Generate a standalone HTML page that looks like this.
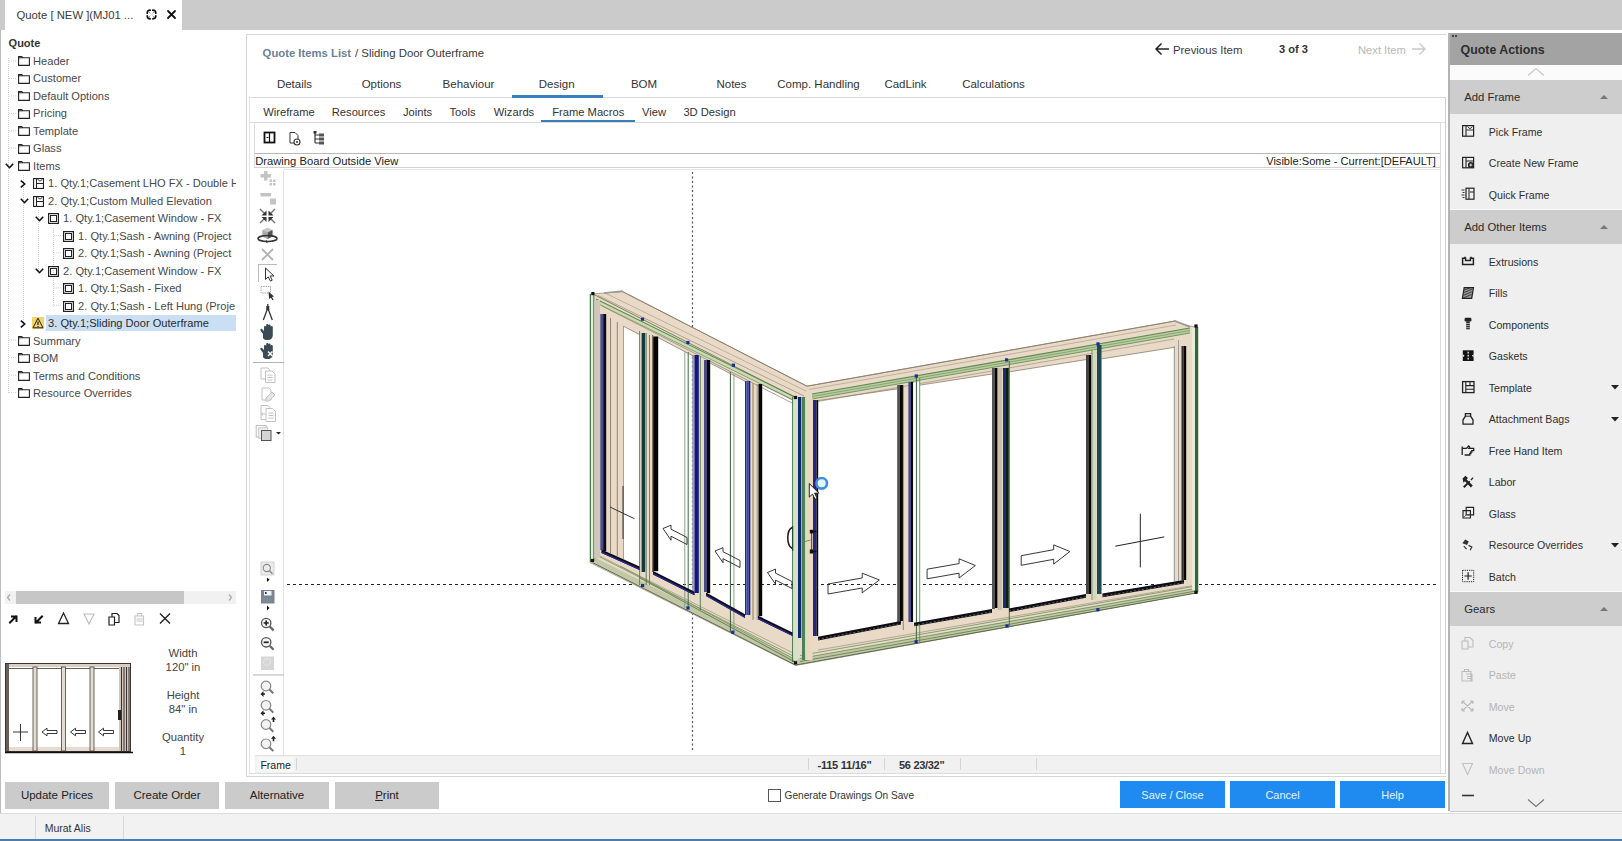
<!DOCTYPE html>
<html><head><meta charset="utf-8">
<style>
*{margin:0;padding:0;box-sizing:border-box}
html,body{width:1622px;height:841px;overflow:hidden;background:#fff;font-family:"Liberation Sans",sans-serif;color:#333;position:relative}
.a{position:absolute;white-space:nowrap;line-height:1}
svg{position:absolute;overflow:visible}
</style></head><body>
<div class="a" style="left:0px;top:0px;width:1622px;height:30px;background:#cbcbcb;"></div>
<div class="a" style="left:5px;top:0px;width:177px;height:30px;background:#fff;"></div>
<div class="a" style="left:16.5px;top:10.13px;font-size:11.3px;color:#3a3a3a;">Quote [ NEW ](MJ01 ...</div>
<svg style="left:145px;top:8px" width="13" height="13" viewBox="0 0 13 13"><g fill="none" stroke="#111" stroke-width="1.7" stroke-linecap="round"><path d="M2.2 5.2Q2.2 2.2 5.2 2.2M7.8 2.2Q10.8 2.2 10.8 5.2M10.8 7.8Q10.8 10.8 7.8 10.8M5.2 10.8Q2.2 10.8 2.2 7.8"/></g><path d="M3.5 3.5l2 2M9.5 3.5l-2 2M3.5 9.5l2-2M9.5 9.5l-2-2" stroke="#999" stroke-width="0.9"/></svg>
<svg style="left:167px;top:9.5px" width="9" height="9" viewBox="0 0 9 9"><path d="M1 1l7 7M8 1L1 8" stroke="#111" stroke-width="1.8" stroke-linecap="round"/></svg>
<div class="a" style="left:0px;top:30px;width:1px;height:783px;background:#bdbdbd;"></div>
<div class="a" style="left:8.6px;top:37.79px;font-size:11px;color:#333;font-weight:bold;">Quote</div>
<svg style="left:0;top:0" width="243" height="420"><g stroke="#d0d0d0" stroke-width="1" stroke-dasharray="1 1" fill="none"><path d="M8.5 58V394M23.5 175V324M38.5 210V272M53.5 228V307"/><path d="M9 61.0h8"/><path d="M9 78.5h8"/><path d="M9 95.9h8"/><path d="M9 113.3h8"/><path d="M9 130.8h8"/><path d="M9 148.2h8"/><path d="M9 340.2h8"/><path d="M9 357.6h8"/><path d="M9 375.1h8"/><path d="M9 392.6h8"/><path d="M54 235.5h8"/><path d="M54 252.9h8"/><path d="M54 287.9h8"/><path d="M54 305.3h8"/></g></svg>
<div class="a" style="left:46px;top:314.5px;width:190px;height:16.5px;background:#cadff3;"></div>
<div class="a" style="left:0;top:50px;width:236px;height:360px;overflow:hidden">
<svg style="left:17.8px;top:6.299999999999997px" width="12" height="10" viewBox="0 0 12 10"><path d="M0.6 9.4V0.6h3.2l0.8 1.2h6.8v7.6z" fill="none" stroke="#222" stroke-width="1.1"/><path d="M0.6 1.8h3.8" stroke="#222" stroke-width="1"/></svg>
<div class="a" style="left:33.1px;top:5.90px;font-size:11.1px;color:#484848;">Header</div>
<svg style="left:17.8px;top:23.78px" width="12" height="10" viewBox="0 0 12 10"><path d="M0.6 9.4V0.6h3.2l0.8 1.2h6.8v7.6z" fill="none" stroke="#222" stroke-width="1.1"/><path d="M0.6 1.8h3.8" stroke="#222" stroke-width="1"/></svg>
<div class="a" style="left:33.1px;top:23.38px;font-size:11.1px;color:#484848;">Customer</div>
<svg style="left:17.8px;top:41.25999999999999px" width="12" height="10" viewBox="0 0 12 10"><path d="M0.6 9.4V0.6h3.2l0.8 1.2h6.8v7.6z" fill="none" stroke="#222" stroke-width="1.1"/><path d="M0.6 1.8h3.8" stroke="#222" stroke-width="1"/></svg>
<div class="a" style="left:33.1px;top:40.86px;font-size:11.1px;color:#484848;">Default Options</div>
<svg style="left:17.8px;top:58.739999999999995px" width="12" height="10" viewBox="0 0 12 10"><path d="M0.6 9.4V0.6h3.2l0.8 1.2h6.8v7.6z" fill="none" stroke="#222" stroke-width="1.1"/><path d="M0.6 1.8h3.8" stroke="#222" stroke-width="1"/></svg>
<div class="a" style="left:33.1px;top:58.34px;font-size:11.1px;color:#484848;">Pricing</div>
<svg style="left:17.8px;top:76.22px" width="12" height="10" viewBox="0 0 12 10"><path d="M0.6 9.4V0.6h3.2l0.8 1.2h6.8v7.6z" fill="none" stroke="#222" stroke-width="1.1"/><path d="M0.6 1.8h3.8" stroke="#222" stroke-width="1"/></svg>
<div class="a" style="left:33.1px;top:75.82px;font-size:11.1px;color:#484848;">Template</div>
<svg style="left:17.8px;top:93.69999999999999px" width="12" height="10" viewBox="0 0 12 10"><path d="M0.6 9.4V0.6h3.2l0.8 1.2h6.8v7.6z" fill="none" stroke="#222" stroke-width="1.1"/><path d="M0.6 1.8h3.8" stroke="#222" stroke-width="1"/></svg>
<div class="a" style="left:33.1px;top:93.30px;font-size:11.1px;color:#484848;">Glass</div>
<svg style="left:17.8px;top:111.18px" width="12" height="10" viewBox="0 0 12 10"><path d="M0.6 9.4V0.6h3.2l0.8 1.2h6.8v7.6z" fill="none" stroke="#222" stroke-width="1.1"/><path d="M0.6 1.8h3.8" stroke="#222" stroke-width="1"/></svg>
<svg style="left:4.600000000000001px;top:113.18px" width="9" height="6" viewBox="0 0 9 6"><path d="M0.8 0.8l3.7 3.9 3.7-3.9" fill="none" stroke="#111" stroke-width="1.6"/></svg>
<div class="a" style="left:33.1px;top:110.78px;font-size:11.1px;color:#484848;">Items</div>
<svg style="left:32.8px;top:128.16px" width="11" height="11" viewBox="0 0 11 11"><g fill="none" stroke="#222" stroke-width="1.1"><rect x="0.55" y="0.55" width="9.9" height="9.9"/><path d="M3.5 0.6v9.8M3.5 5.5h7"/><path d="M4.5 1.2l2.5 2 2.5-2" stroke-width="0.9"/></g></svg>
<svg style="left:20.299999999999997px;top:130.16px" width="6" height="8" viewBox="0 0 6 8"><path d="M0.8 0.6l3.9 3.4-3.9 3.4" fill="none" stroke="#111" stroke-width="1.6"/></svg>
<div class="a" style="left:48.1px;top:128.26px;font-size:11.1px;color:#484848;">1. Qty.1;Casement LHO FX - Double H</div>
<svg style="left:32.8px;top:145.64px" width="11" height="11" viewBox="0 0 11 11"><g fill="none" stroke="#222" stroke-width="1.1"><rect x="0.55" y="0.55" width="9.9" height="9.9"/><path d="M3.5 0.6v9.8M3.5 5.5h7"/><path d="M4.5 1.2l2.5 2 2.5-2" stroke-width="0.9"/></g></svg>
<svg style="left:19.599999999999998px;top:148.14px" width="9" height="6" viewBox="0 0 9 6"><path d="M0.8 0.8l3.7 3.9 3.7-3.9" fill="none" stroke="#111" stroke-width="1.6"/></svg>
<div class="a" style="left:48.1px;top:145.74px;font-size:11.1px;color:#484848;">2. Qty.1;Custom Mulled Elevation</div>
<svg style="left:47.8px;top:163.12px" width="11" height="11" viewBox="0 0 11 11"><g fill="none" stroke="#222"><rect x="0.6" y="0.6" width="9.8" height="9.8" stroke-width="1.2"/><rect x="2.5" y="2.5" width="6" height="6" stroke-width="1"/></g></svg>
<svg style="left:34.599999999999994px;top:165.62px" width="9" height="6" viewBox="0 0 9 6"><path d="M0.8 0.8l3.7 3.9 3.7-3.9" fill="none" stroke="#111" stroke-width="1.6"/></svg>
<div class="a" style="left:63.1px;top:163.22px;font-size:11.1px;color:#484848;">1. Qty.1;Casement Window - FX</div>
<svg style="left:62.8px;top:180.60000000000002px" width="11" height="11" viewBox="0 0 11 11"><g fill="none" stroke="#222"><rect x="0.6" y="0.6" width="9.8" height="9.8" stroke-width="1.2"/><rect x="2.5" y="2.5" width="6" height="6" stroke-width="1"/></g></svg>
<div class="a" style="left:78.1px;top:180.70px;font-size:11.1px;color:#484848;">1. Qty.1;Sash - Awning (Project</div>
<svg style="left:62.8px;top:198.07999999999998px" width="11" height="11" viewBox="0 0 11 11"><g fill="none" stroke="#222"><rect x="0.6" y="0.6" width="9.8" height="9.8" stroke-width="1.2"/><rect x="2.5" y="2.5" width="6" height="6" stroke-width="1"/></g></svg>
<div class="a" style="left:78.1px;top:198.18px;font-size:11.1px;color:#484848;">2. Qty.1;Sash - Awning (Project</div>
<svg style="left:47.8px;top:215.56px" width="11" height="11" viewBox="0 0 11 11"><g fill="none" stroke="#222"><rect x="0.6" y="0.6" width="9.8" height="9.8" stroke-width="1.2"/><rect x="2.5" y="2.5" width="6" height="6" stroke-width="1"/></g></svg>
<svg style="left:34.599999999999994px;top:218.06px" width="9" height="6" viewBox="0 0 9 6"><path d="M0.8 0.8l3.7 3.9 3.7-3.9" fill="none" stroke="#111" stroke-width="1.6"/></svg>
<div class="a" style="left:63.1px;top:215.66px;font-size:11.1px;color:#484848;">2. Qty.1;Casement Window - FX</div>
<svg style="left:62.8px;top:233.04000000000002px" width="11" height="11" viewBox="0 0 11 11"><g fill="none" stroke="#222"><rect x="0.6" y="0.6" width="9.8" height="9.8" stroke-width="1.2"/><rect x="2.5" y="2.5" width="6" height="6" stroke-width="1"/></g></svg>
<div class="a" style="left:78.1px;top:233.14px;font-size:11.1px;color:#484848;">1. Qty.1;Sash - Fixed</div>
<svg style="left:62.8px;top:250.51999999999998px" width="11" height="11" viewBox="0 0 11 11"><g fill="none" stroke="#222"><rect x="0.6" y="0.6" width="9.8" height="9.8" stroke-width="1.2"/><rect x="2.5" y="2.5" width="6" height="6" stroke-width="1"/></g></svg>
<div class="a" style="left:78.1px;top:250.62px;font-size:11.1px;color:#484848;">2. Qty.1;Sash - Left Hung (Proje</div>
<svg style="left:31.799999999999997px;top:267.0px" width="12" height="12" viewBox="0 0 12 12"><rect x="0" y="0" width="12" height="12" fill="#f3d36b"/><path d="M6 1.2L11 10.8H1z" fill="none" stroke="#222" stroke-width="1"/><path d="M6 4.5v3.5M6 9v1" stroke="#222" stroke-width="1.2"/></svg>
<svg style="left:20.299999999999997px;top:270.0px" width="6" height="8" viewBox="0 0 6 8"><path d="M0.8 0.6l3.9 3.4-3.9 3.4" fill="none" stroke="#111" stroke-width="1.6"/></svg>
<div class="a" style="left:48.1px;top:268.10px;font-size:11.1px;color:#2a2a2a;">3. Qty.1;Sliding Door Outerframe</div>
<svg style="left:17.8px;top:285.98px" width="12" height="10" viewBox="0 0 12 10"><path d="M0.6 9.4V0.6h3.2l0.8 1.2h6.8v7.6z" fill="none" stroke="#222" stroke-width="1.1"/><path d="M0.6 1.8h3.8" stroke="#222" stroke-width="1"/></svg>
<div class="a" style="left:33.1px;top:285.58px;font-size:11.1px;color:#484848;">Summary</div>
<svg style="left:17.8px;top:303.46000000000004px" width="12" height="10" viewBox="0 0 12 10"><path d="M0.6 9.4V0.6h3.2l0.8 1.2h6.8v7.6z" fill="none" stroke="#222" stroke-width="1.1"/><path d="M0.6 1.8h3.8" stroke="#222" stroke-width="1"/></svg>
<div class="a" style="left:33.1px;top:303.06px;font-size:11.1px;color:#484848;">BOM</div>
<svg style="left:17.8px;top:320.94px" width="12" height="10" viewBox="0 0 12 10"><path d="M0.6 9.4V0.6h3.2l0.8 1.2h6.8v7.6z" fill="none" stroke="#222" stroke-width="1.1"/><path d="M0.6 1.8h3.8" stroke="#222" stroke-width="1"/></svg>
<div class="a" style="left:33.1px;top:320.54px;font-size:11.1px;color:#484848;">Terms and Conditions</div>
<svg style="left:17.8px;top:338.42px" width="12" height="10" viewBox="0 0 12 10"><path d="M0.6 9.4V0.6h3.2l0.8 1.2h6.8v7.6z" fill="none" stroke="#222" stroke-width="1.1"/><path d="M0.6 1.8h3.8" stroke="#222" stroke-width="1"/></svg>
<div class="a" style="left:33.1px;top:338.02px;font-size:11.1px;color:#484848;">Resource Overrides</div>
</div>
<div class="a" style="left:5px;top:591px;width:231px;height:13px;background:#f1f1f1;"></div>
<div class="a" style="left:16px;top:591px;width:168px;height:13px;background:#c6c6c6;"></div>
<svg style="left:6px;top:593px" width="230" height="9"><path d="M4 1.5L1.5 4.5 4 7.5" fill="none" stroke="#aaa" stroke-width="1.2"/><path d="M223 1.5l2.5 3-2.5 3" fill="none" stroke="#aaa" stroke-width="1.2"/></svg>
<svg style="left:0;top:608px" width="200" height="22"><g fill="none" stroke-linecap="square"><path d="M10 14.5l6-6M12 8.5h4.5v4.5" stroke="#111" stroke-width="2"/><path d="M42 8.5l-6 6M35.5 10v4.5H40" stroke="#111" stroke-width="2"/><path d="M63.5 5l-5 10.5h10z" stroke="#222" stroke-width="1.3"/><path d="M84 6h10l-5 10z" stroke="#bbb" stroke-width="1.1"/><path d="M109 9h5.5v8H109zM112 9V5.5h5l2 2v7h-4.5" stroke="#222" stroke-width="1.2"/><path d="M135 8h8.5v9H135zM137.5 8V5.5h4v2.5M137 11h5M137 13h5" stroke="#c4c4c4" stroke-width="1.1"/><path d="M160.5 6l9 9M169.5 6l-9 9" stroke="#222" stroke-width="1.4"/></g></svg>
<svg style="left:0;top:655px" width="140" height="105" viewBox="0 655 140 105">
<g>
<rect x="5.5" y="663.5" width="125" height="88" fill="#fff" stroke="#3a3330" stroke-width="1"/>
<rect x="6" y="664" width="124" height="3" fill="#d9cfc5"/>
<rect x="6" y="664" width="3" height="87" fill="#6a5f58"/>
<path d="M9 668.5h110M9 748.5h110" stroke="#6a5f58" stroke-width="1"/>
<rect x="9" y="747" width="110" height="4" fill="#e4dbd1"/>
<rect x="33" y="667" width="4" height="84" fill="#e4dbd1" stroke="#4a403a" stroke-width="0.8"/>
<rect x="61.5" y="667" width="4" height="84" fill="#e4dbd1" stroke="#4a403a" stroke-width="0.8"/>
<rect x="90" y="667" width="4" height="84" fill="#e4dbd1" stroke="#4a403a" stroke-width="0.8"/>
<rect x="119" y="667" width="11" height="84" fill="#cfc5bb"/>
<path d="M121.5 667v84M124 667v84M126.5 667v84M129 667v84" stroke="#3a3330" stroke-width="1"/>
<rect x="118" y="710" width="3" height="10" fill="#222"/>
<path d="M5 752.5h128" stroke="#111" stroke-width="1.6"/>
<path d="M13 732h15M20.5 724v17" stroke="#222" stroke-width="0.9"/>
<path d="M42 732l5-3.8v2.3h10v3h-10v2.3z" fill="#fff" stroke="#222" stroke-width="0.9"/><path d="M70.5 732l5-3.8v2.3h10v3h-10v2.3z" fill="#fff" stroke="#222" stroke-width="0.9"/><path d="M98.5 732l5-3.8v2.3h10v3h-10v2.3z" fill="#fff" stroke="#222" stroke-width="0.9"/>
</g></svg>
<div class="a" style="left:33.0px;width:300px;text-align:center;top:648.43px;font-size:11.3px;color:#444;">Width</div>
<div class="a" style="left:33.0px;width:300px;text-align:center;top:662.43px;font-size:11.3px;color:#444;">120" in</div>
<div class="a" style="left:33.0px;width:300px;text-align:center;top:690.33px;font-size:11.3px;color:#444;">Height</div>
<div class="a" style="left:33.0px;width:300px;text-align:center;top:704.43px;font-size:11.3px;color:#444;">84" in</div>
<div class="a" style="left:33.0px;width:300px;text-align:center;top:731.93px;font-size:11.3px;color:#444;">Quantity</div>
<div class="a" style="left:33.0px;width:300px;text-align:center;top:746.13px;font-size:11.3px;color:#444;">1</div>
<div class="a" style="left:5px;top:782px;width:104px;height:27px;background:#cbcbcb;"></div>
<div class="a" style="left:-93.0px;width:300px;text-align:center;top:790.27px;font-size:11.5px;color:#222;">Update Prices</div>
<div class="a" style="left:115px;top:782px;width:104px;height:27px;background:#cbcbcb;"></div>
<div class="a" style="left:17.0px;width:300px;text-align:center;top:790.27px;font-size:11.5px;color:#222;">Create Order</div>
<div class="a" style="left:225px;top:782px;width:104px;height:27px;background:#cbcbcb;"></div>
<div class="a" style="left:127.0px;width:300px;text-align:center;top:790.27px;font-size:11.5px;color:#222;">Alternative</div>
<div class="a" style="left:335px;top:782px;width:104px;height:27px;background:#cbcbcb;"></div>
<div class="a" style="left:237.0px;width:300px;text-align:center;top:790.27px;font-size:11.5px;color:#222;"><u>P</u>rint</div>
<div class="a" style="left:246px;top:34px;width:1200px;height:743px;border:1px solid #d6d6d6;border-right:none"></div>
<div class="a" style="left:249px;top:97px;width:1197px;height:677px;border-left:1px solid #e4e4e4;border-top:1px solid #dadada;border-bottom:1px solid #dadada;border-right:1px solid #cfcfcf"></div>
<div class="a" style="left:262.6px;top:48.23px;font-size:11.3px;color:#6b8198;font-weight:bold;">Quote Items List</div>
<div class="a" style="left:355.0px;top:48.15px;font-size:11.4px;color:#3a3a3a;">/ Sliding Door Outerframe</div>
<svg style="left:1154px;top:42px" width="16" height="14"><path d="M15 7H2M7.5 1.5L2 7l5.5 5.5" fill="none" stroke="#222" stroke-width="1.5"/></svg>
<div class="a" style="left:1173.0px;top:45.09px;font-size:11.35px;color:#3a3a3a;">Previous Item</div>
<div class="a" style="left:1279.0px;top:44.30px;font-size:11.1px;color:#333;font-weight:bold;">3 of 3</div>
<div class="a" style="left:1358.0px;top:45.22px;font-size:11.2px;color:#b8b8b8;">Next Item</div>
<svg style="left:1411px;top:42px" width="16" height="14"><path d="M1 7h13M8.5 1.5L14 7l-5.5 5.5" fill="none" stroke="#c8c8c8" stroke-width="1.3"/></svg>
<div class="a" style="left:144.5px;width:300px;text-align:center;top:79.27px;font-size:11.5px;color:#333;">Details</div>
<div class="a" style="left:231.5px;width:300px;text-align:center;top:79.27px;font-size:11.5px;color:#333;">Options</div>
<div class="a" style="left:318.5px;width:300px;text-align:center;top:79.27px;font-size:11.5px;color:#333;">Behaviour</div>
<div class="a" style="left:406.7px;width:300px;text-align:center;top:79.27px;font-size:11.5px;color:#333;">Design</div>
<div class="a" style="left:494.0px;width:300px;text-align:center;top:79.27px;font-size:11.5px;color:#333;">BOM</div>
<div class="a" style="left:581.5px;width:300px;text-align:center;top:79.27px;font-size:11.5px;color:#333;">Notes</div>
<div class="a" style="left:668.5px;width:300px;text-align:center;top:79.27px;font-size:11.5px;color:#333;">Comp. Handling</div>
<div class="a" style="left:755.5px;width:300px;text-align:center;top:79.27px;font-size:11.5px;color:#333;">CadLink</div>
<div class="a" style="left:843.5px;width:300px;text-align:center;top:79.27px;font-size:11.5px;color:#333;">Calculations</div>
<div class="a" style="left:512px;top:95px;width:91px;height:3px;background:#3b7dbd;"></div>
<div class="a" style="left:139.0px;width:300px;text-align:center;top:107.02px;font-size:11.2px;color:#333;">Wireframe</div>
<div class="a" style="left:208.5px;width:300px;text-align:center;top:107.02px;font-size:11.2px;color:#333;">Resources</div>
<div class="a" style="left:267.5px;width:300px;text-align:center;top:107.02px;font-size:11.2px;color:#333;">Joints</div>
<div class="a" style="left:312.5px;width:300px;text-align:center;top:107.02px;font-size:11.2px;color:#333;">Tools</div>
<div class="a" style="left:364.0px;width:300px;text-align:center;top:107.02px;font-size:11.2px;color:#333;">Wizards</div>
<div class="a" style="left:438.2px;width:300px;text-align:center;top:107.02px;font-size:11.2px;color:#333;">Frame Macros</div>
<div class="a" style="left:504.0px;width:300px;text-align:center;top:107.02px;font-size:11.2px;color:#333;">View</div>
<div class="a" style="left:559.5px;width:300px;text-align:center;top:107.02px;font-size:11.2px;color:#333;">3D Design</div>
<div class="a" style="left:541px;top:120px;width:94px;height:3px;background:#3b7dbd;"></div>
<div class="a" style="left:250px;top:122px;width:1195px;height:1px;background:#dedede;"></div>
<div class="a" style="left:254px;top:122px;width:1187px;height:33px;border:1px solid #dcdcdc;border-bottom:2px solid #b9b9b9"></div>
<svg style="left:262px;top:130px" width="70" height="16"><rect x="2.5" y="2.5" width="10" height="10" fill="none" stroke="#111" stroke-width="1.8"/><path d="M7.5 3v9M4.5 7.5h2" stroke="#111" stroke-width="1.2"/><path d="M28 2.5h5l3 3v7.5h-8z" fill="none" stroke="#333" stroke-width="1"/><circle cx="35" cy="12" r="3" fill="#fff" stroke="#333" stroke-width="1.1"/><circle cx="35" cy="12" r="1" fill="#333"/><path d="M53 2v11M53 5h4M53 9h4M53 13h4" stroke="#333" stroke-width="1.2"/><rect x="51.5" y="1" width="3" height="2.5" fill="#333"/><rect x="57" y="3.5" width="5" height="3" fill="#555"/><rect x="57" y="7.5" width="5" height="3" fill="#555"/><rect x="57" y="11.5" width="5" height="3" fill="#555"/></svg>
<div class="a" style="left:254px;top:154px;width:1187px;height:14px;background:#fff;border-left:1px solid #dcdcdc;border-right:1px solid #dcdcdc;border-bottom:1px solid #d2d2d2"></div>
<div class="a" style="left:255.2px;top:155.99px;font-size:11.23px;color:#222;">Drawing Board Outside View</div>
<div class="a" style="left:1266.2px;top:156.10px;font-size:11.1px;color:#222;">Visible:Some - Current:[DEFAULT]</div>
<div class="a" style="left:254px;top:168px;width:1187px;height:606px;border:1px solid #dcdcdc;border-left:none;border-top:none"></div>
<div class="a" style="left:283px;top:170px;width:1px;height:585px;background:#e2e2e2;"></div>
<div class="a" style="left:284px;top:169px;width:1157px;height:1px;background:#e8e8e8;"></div>
<div class="a" style="left:255px;top:755px;width:1185px;height:1px;background:#e0e0e0;"></div>
<div class="a" style="left:255px;top:756px;width:1185px;height:17px;background:#f1f1f1;"></div>
<div class="a" style="left:257px;top:757px;width:37px;height:15px;background:#f7f7f7;"></div>
<div class="a" style="left:296px;top:758px;width:1px;height:12px;background:#d4d4d4;"></div>
<div class="a" style="left:807.5px;top:758px;width:1px;height:12px;background:#d4d4d4;"></div>
<div class="a" style="left:883.5px;top:758px;width:1px;height:12px;background:#d4d4d4;"></div>
<div class="a" style="left:959.5px;top:758px;width:1px;height:12px;background:#d4d4d4;"></div>
<div class="a" style="left:1035.5px;top:758px;width:1px;height:12px;background:#d4d4d4;"></div>
<div class="a" style="left:260.4px;top:760.01px;font-size:10.5px;color:#222;">Frame</div>
<div class="a" style="left:817.6px;top:759.60px;font-size:11.1px;color:#333;font-weight:bold;letter-spacing:-0.3px">-115 11/16"</div>
<div class="a" style="left:899.0px;top:759.69px;font-size:11.0px;color:#333;font-weight:bold;letter-spacing:-0.3px">56 23/32"</div>
<div class="a" style="left:768px;top:788.5px;width:13px;height:13px;border:1.3px solid #555;background:#fff"></div>
<div class="a" style="left:784.6px;top:790.82px;font-size:10.13px;color:#333;">Generate Drawings On Save</div>
<div class="a" style="left:1120px;top:781px;width:105px;height:27px;background:#1f8bf0;"></div>
<div class="a" style="left:1022.5px;width:300px;text-align:center;top:790.19px;font-size:11px;color:#e8f2fc;">Save / Close</div>
<div class="a" style="left:1230px;top:781px;width:105px;height:27px;background:#1f8bf0;"></div>
<div class="a" style="left:1132.5px;width:300px;text-align:center;top:790.19px;font-size:11px;color:#e8f2fc;">Cancel</div>
<div class="a" style="left:1340px;top:781px;width:105px;height:27px;background:#1f8bf0;"></div>
<div class="a" style="left:1242.5px;width:300px;text-align:center;top:790.19px;font-size:11px;color:#e8f2fc;">Help</div>
<div class="a" style="left:1448px;top:33px;width:174px;height:778px;background:#efefef;"></div>
<div class="a" style="left:1448px;top:33px;width:2px;height:778px;background:#b3b3b3;"></div>
<div class="a" style="left:1450px;top:33px;width:172px;height:32px;background:#a3a3a3;"></div>
<div class="a" style="left:1460.5px;top:44.20px;font-size:12.4px;color:#2e2e2e;font-weight:bold;">Quote Actions</div>
<svg style="left:1452px;top:35px" width="8" height="4"><rect x="0" y="0" width="2" height="2" fill="#444"/><rect x="3" y="0" width="2" height="2" fill="#444"/></svg>
<div class="a" style="left:1450px;top:65px;width:172px;height:15px;background:#fbfbfb;"></div>
<svg style="left:1527px;top:67px" width="18" height="10"><path d="M1 8.5L9 1.5l8 7" fill="none" stroke="#c8c8c8" stroke-width="1.2"/></svg>
<div class="a" style="left:1450px;top:80px;width:172px;height:34px;background:#cdcdcd;"></div>
<div class="a" style="left:1464.3px;top:92.33px;font-size:11.3px;color:#2a2a2a;">Add Frame</div>
<svg style="left:1599px;top:94px" width="10" height="6"><path d="M1 5l4-4 4 4z" fill="#777"/></svg>
<div class="a" style="left:1450px;top:210px;width:172px;height:34px;background:#cdcdcd;"></div>
<div class="a" style="left:1464.3px;top:222.33px;font-size:11.3px;color:#2a2a2a;">Add Other Items</div>
<svg style="left:1599px;top:224px" width="10" height="6"><path d="M1 5l4-4 4 4z" fill="#777"/></svg>
<div class="a" style="left:1450px;top:592px;width:172px;height:34px;background:#cdcdcd;"></div>
<div class="a" style="left:1464.3px;top:604.33px;font-size:11.3px;color:#2a2a2a;">Gears</div>
<svg style="left:1599px;top:606px" width="10" height="6"><path d="M1 5l4-4 4 4z" fill="#777"/></svg>
<div class="a" style="left:1450px;top:209px;width:172px;height:1px;background:#fafafa;"></div>
<div class="a" style="left:1450px;top:591px;width:172px;height:1px;background:#fafafa;"></div>
<div class="a" style="left:1488.8px;top:126.53px;font-size:10.6px;color:#2e2e2e;">Pick Frame</div>
<svg style="left:1460px;top:124px" width="16" height="14"><rect x="2.6" y="1.6" width="11" height="10.6" fill="none" stroke="#222" stroke-width="1.2"/><path d="M6 1.6v10.6" stroke="#222" stroke-width="1.1"/><path d="M7.5 2.5l2.5 2.3 2.5-2.3M6.5 6h6.5" stroke="#222" stroke-width="0.9" fill="none"/></svg>
<div class="a" style="left:1488.8px;top:158.03px;font-size:10.6px;color:#2e2e2e;">Create New Frame</div>
<svg style="left:1460px;top:155.5px" width="16" height="14"><rect x="2.6" y="1.4" width="11" height="10.4" fill="none" stroke="#222" stroke-width="1.2"/><path d="M6 1.4v10.4M6.5 5h7" stroke="#222" stroke-width="1.1"/><circle cx="10.8" cy="9" r="2.9" fill="#222"/><path d="M10.8 7.5v3M9.3 9h3" stroke="#efefef" stroke-width="0.9"/></svg>
<div class="a" style="left:1488.8px;top:189.53px;font-size:10.6px;color:#2e2e2e;">Quick Frame</div>
<svg style="left:1460px;top:187px" width="16" height="14"><rect x="6" y="1.2" width="8" height="11" fill="none" stroke="#222" stroke-width="1.2"/><path d="M9 1.2v11M9.5 5h4.5" stroke="#222" stroke-width="1"/><path d="M1.5 3h3M2.5 5.5h2M1.5 8h3M2.5 10.5h2" stroke="#222" stroke-width="0.9"/></svg>
<div class="a" style="left:1488.8px;top:256.53px;font-size:10.6px;color:#2e2e2e;">Extrusions</div>
<svg style="left:1460px;top:254.0px" width="16" height="14"><path d="M2.6 10.4V4.2h3v2.4h4.8V4.2h3v6.2z" fill="none" stroke="#222" stroke-width="1.5"/><path d="M4 3.3h2M10 3.3h2" stroke="#222" stroke-width="1"/></svg>
<div class="a" style="left:1488.8px;top:288.03px;font-size:10.6px;color:#2e2e2e;">Fills</div>
<svg style="left:1460px;top:285.5px" width="16" height="14"><path d="M4.2 1.6h9.3l-1.8 10.8H2.4z" fill="#9a9a9a" stroke="#222" stroke-width="1.2"/><path d="M4.4 3.8l6.5-2.2M4 6.5l8.3-3.5M3.6 9.3l8.2-3.6M3.2 12l8.3-3.6" stroke="#222" stroke-width="0.8"/></svg>
<div class="a" style="left:1488.8px;top:319.53px;font-size:10.6px;color:#2e2e2e;">Components</div>
<svg style="left:1460px;top:317.0px" width="16" height="14"><rect x="4.6" y="0.8" width="6.8" height="3.6" rx="1.2" fill="#222"/><rect x="6.2" y="4.4" width="3.6" height="7.9" fill="#222"/><path d="M6.2 6.5h3.6M6.2 8.6h3.6M6.2 10.7h3.6" stroke="#efefef" stroke-width="0.7"/></svg>
<div class="a" style="left:1488.8px;top:351.03px;font-size:10.6px;color:#2e2e2e;">Gaskets</div>
<svg style="left:1460px;top:348.5px" width="16" height="14"><rect x="2.8" y="1.3" width="10.8" height="10.7" fill="#141414"/><path d="M2.8 5.2l1.8 1.5-1.8 1.5zM13.6 5.2l-1.8 1.5 1.8 1.5z" fill="#efefef"/><path d="M8.2 2.8v1.8M8.2 5.8v1.8M8.2 8.8v1.8" stroke="#efefef" stroke-width="1.3"/></svg>
<div class="a" style="left:1488.8px;top:382.53px;font-size:10.6px;color:#2e2e2e;">Template</div>
<svg style="left:1460px;top:380.0px" width="16" height="14"><rect x="2.6" y="1.6" width="11.4" height="11" fill="none" stroke="#222" stroke-width="1.3"/><path d="M5.8 1.6v11M5.8 5.6h8.2M5.8 9.2h8.2M10 1.6v4" stroke="#222" stroke-width="1.1"/></svg>
<svg style="left:1611px;top:385.0px" width="8" height="5"><path d="M0 0h8L4 4.5z" fill="#222"/></svg>
<div class="a" style="left:1488.8px;top:414.03px;font-size:10.6px;color:#2e2e2e;">Attachment Bags</div>
<svg style="left:1460px;top:411.5px" width="16" height="14"><path d="M5.4 1.6h5.2v2.6l2.4 3.6v4.4H3V7.8l2.4-3.6z" fill="none" stroke="#222" stroke-width="1.3"/><path d="M5.4 4.2h5.2" stroke="#222" stroke-width="1"/></svg>
<svg style="left:1611px;top:416.5px" width="8" height="5"><path d="M0 0h8L4 4.5z" fill="#222"/></svg>
<div class="a" style="left:1488.8px;top:445.53px;font-size:10.6px;color:#2e2e2e;">Free Hand Item</div>
<svg style="left:1460px;top:443.0px" width="16" height="14"><path d="M2.2 3.5v8.5M2.2 5.4h4.2l2.3-2.4 1 1-0.9 1.4h4.9v2.2h-1.9v1.4h-1v1.5h-1v1.5H4.6" fill="none" stroke="#222" stroke-width="1.3"/></svg>
<div class="a" style="left:1488.8px;top:477.03px;font-size:10.6px;color:#2e2e2e;">Labor</div>
<svg style="left:1460px;top:474.5px" width="16" height="14"><path d="M2.6 3.6l2.8-2.8 2.6 2.3-1.4 1.5 6.2 6-1.9 1.9-6-6.2-1.5 1.4z" fill="#222"/><path d="M12.8 2.2l-2.4 2.2 1 1 2.2-2.4zM9.2 5.8L3 11.4l1.6 1.6 5.8-6.2z" fill="#222"/></svg>
<div class="a" style="left:1488.8px;top:508.53px;font-size:10.6px;color:#2e2e2e;">Glass</div>
<svg style="left:1460px;top:506.0px" width="16" height="14"><path d="M6.2 1.4h7.4v7.4H6.2zM3 4.6h7.4V12H3z" fill="none" stroke="#222" stroke-width="1.15"/><path d="M4.2 10.8l1.6-1.6" stroke="#222" stroke-width="0.8"/></svg>
<div class="a" style="left:1488.8px;top:540.03px;font-size:10.6px;color:#2e2e2e;">Resource Overrides</div>
<svg style="left:1460px;top:537.5px" width="16" height="14"><path d="M2.4 5.2l2.8-3.8 3.6 2-1.8 3.6z" fill="#333"/><path d="M3.8 8.2l2.8 3M8.6 7.4l3.2 1.6-1.6 3.2" fill="none" stroke="#333" stroke-width="1.2"/></svg>
<svg style="left:1611px;top:542.5px" width="8" height="5"><path d="M0 0h8L4 4.5z" fill="#222"/></svg>
<div class="a" style="left:1488.8px;top:571.53px;font-size:10.6px;color:#2e2e2e;">Batch</div>
<svg style="left:1460px;top:569.0px" width="16" height="14"><rect x="2.5" y="1.3" width="11.2" height="11.4" fill="none" stroke="#222" stroke-width="1" stroke-dasharray="1.2 1"/><path d="M8.1 3.3v7.4M4.4 7h7.4" stroke="#222" stroke-width="1.2"/></svg>
<div class="a" style="left:1488.8px;top:638.53px;font-size:10.6px;color:#b5b5b5;">Copy</div>
<svg style="left:1460px;top:636.0px" width="16" height="14"><g fill="none" stroke="#bcbcbc" stroke-width="1.1"><path d="M2 5h6v8H2zM5 5V1.5h5l3 3V11H8"/></g></svg>
<div class="a" style="left:1488.8px;top:670.03px;font-size:10.6px;color:#b5b5b5;">Paste</div>
<svg style="left:1460px;top:667.5px" width="16" height="14"><g fill="none" stroke="#bcbcbc" stroke-width="1.1"><path d="M2 3.5h9V13H2zM4.5 3.5V1.5h4v2M6 6h6v7H6M7 8.5h4M7 10.5h4"/></g></svg>
<div class="a" style="left:1488.8px;top:701.53px;font-size:10.6px;color:#b5b5b5;">Move</div>
<svg style="left:1460px;top:699.0px" width="16" height="14"><g fill="none" stroke="#bcbcbc" stroke-width="1.2"><path d="M2 2l11 10M13 2L2 12M2 2h3M2 2v3M13 2h-3M13 2v3M2 12h3M2 12V9M13 12h-3M13 12V9"/></g></svg>
<div class="a" style="left:1488.8px;top:733.03px;font-size:10.6px;color:#2e2e2e;">Move Up</div>
<svg style="left:1460px;top:730.5px" width="16" height="14"><path d="M7.5 1.5L2.5 12.5h10z" fill="none" stroke="#222" stroke-width="1.4"/></svg>
<div class="a" style="left:1488.8px;top:764.53px;font-size:10.6px;color:#b5b5b5;">Move Down</div>
<svg style="left:1460px;top:762.0px" width="16" height="14"><path d="M2.5 1.5h10L7.5 12.5z" fill="none" stroke="#c0c0c0" stroke-width="1.1"/></svg>
<svg style="left:1462px;top:794px" width="14" height="4"><path d="M0 1.5h12" stroke="#333" stroke-width="1.6"/></svg>
<svg style="left:1527px;top:798px" width="18" height="10"><path d="M1 1.5l8 7 8-7" fill="none" stroke="#777" stroke-width="1.2"/></svg>
<div class="a" style="left:1450px;top:811px;width:172px;height:1px;background:#c8c8c8;"></div>
<div class="a" style="left:0px;top:813px;width:1622px;height:1px;background:#dedede;"></div>
<div class="a" style="left:0px;top:814px;width:1622px;height:25px;background:#f2f2f2;"></div>
<div class="a" style="left:0px;top:839px;width:1622px;height:2px;background:#4a7db0;"></div>
<div class="a" style="left:35px;top:816px;width:1px;height:23px;background:#d8d8d8;"></div>
<div class="a" style="left:123px;top:816px;width:1px;height:23px;background:#d8d8d8;"></div>
<div class="a" style="left:44.7px;top:822.51px;font-size:10.5px;color:#333;">Murat Alis</div>
<svg style="left:0;top:0" width="1622" height="841" viewBox="0 0 1622 841"><defs><clipPath id="cv"><rect x="284" y="170" width="1156" height="585"/></clipPath><clipPath id="gl"><polygon points="623.5,326.3 639.5,334.6 639.5,566.4 623.5,559.3"/><polygon points="658.0,337.5 694.5,356.7 694.5,591.7 658.0,573.5"/><polygon points="710.0,363.0 745.0,381.2 745.0,614.3 710.0,594.6"/><polygon points="762.0,384.7 792.5,400.0 792.5,632.5 762.0,617.7"/><polygon points="818.0,400.6 897.0,388.9 897.0,621.8 818.0,636.8"/><polygon points="920.0,385.1 992.0,374.0 992.0,609.1 920.0,621.7"/><polygon points="1010.0,371.7 1086.0,359.6 1086.0,594.1 1010.0,608.4"/><polygon points="1101.5,358.9 1174.0,347.4 1174.0,581.7 1101.5,593.7"/></clipPath></defs><g clip-path="url(#cv)"><path d="M287 584.5H1437" stroke="#222" stroke-width="1" stroke-dasharray="3 3"/><path d="M692.5 172V752" stroke="#555" stroke-width="1.2" stroke-dasharray="2 2.5"/><polygon points="590.0,294.0 623.0,291.8 807.0,386.2 1174.0,321.2 1190.0,326.0 1198.0,327.0 1198.0,592.5 795.5,665.5 590.0,562.5" fill="#e9dac8" stroke="#9a9080" stroke-width="0.8"/><polygon points="623.5,326.3 639.5,334.6 639.5,566.4 623.5,559.3" fill="#fff"/><polygon points="658.0,337.5 694.5,356.7 694.5,591.7 658.0,573.5" fill="#fff"/><polygon points="710.0,363.0 745.0,381.2 745.0,614.3 710.0,594.6" fill="#fff"/><polygon points="762.0,384.7 792.5,400.0 792.5,632.5 762.0,617.7" fill="#fff"/><polygon points="818.0,400.6 897.0,388.9 897.0,621.8 818.0,636.8" fill="#fff"/><polygon points="920.0,385.1 992.0,374.0 992.0,609.1 920.0,621.7" fill="#fff"/><polygon points="1010.0,371.7 1086.0,359.6 1086.0,594.1 1010.0,608.4" fill="#fff"/><polygon points="1101.5,358.9 1174.0,347.4 1174.0,581.7 1101.5,593.7" fill="#fff"/><g clip-path="url(#gl)"><path d="M287 584.5H1437" stroke="#222" stroke-width="1" stroke-dasharray="3 3"/><path d="M692.5 172V752" stroke="#555" stroke-width="1.2" stroke-dasharray="2 2.5"/></g><path d="M604.0 292.5L806.0 391.0" stroke="#b5a592" stroke-width="0.8" fill="none" /><path d="M598.0 295.5L804.0 396.0" stroke="#a0947e" stroke-width="0.8" fill="none" /><polygon points="596,299 796,397.5 796,401 596,302.5" fill="#cadbb4"/><path d="M596.0 299.0L796.0 397.5" stroke="#5f8a50" stroke-width="1.1" fill="none" /><path d="M596.0 302.8L796.0 401.3" stroke="#7a9a68" stroke-width="0.9" fill="none" /><path d="M602.0 306.0L794.0 404.0" stroke="#9a8a78" stroke-width="0.8" fill="none" /><path d="M809.0 389.5L1176.0 325.0" stroke="#b5a592" stroke-width="0.8" fill="none" /><polygon points="812,394 1190,328 1190,333 812,399" fill="#b9cba0"/><path d="M812.0 394.0L1190.0 328.0" stroke="#5f8a50" stroke-width="1.2" fill="none" /><path d="M812.0 396.5L1190.0 330.5" stroke="#86a070" stroke-width="0.9" fill="none" /><path d="M812.0 399.0L1190.0 333.0" stroke="#6f9a5f" stroke-width="1.0" fill="none" /><path d="M815.0 402.0L1174.0 339.0" stroke="#a89a88" stroke-width="0.8" fill="none" /><polygon points="594,557 795.5,659 795.5,664.5 594,562.5" fill="#b4c29c" opacity="0.75"/><polygon points="795.5,659 1196,588 1196,593 795.5,664.5" fill="#b4c29c" opacity="0.75"/><path d="M594.0 553.0L795.0 654.0" stroke="#a89a88" stroke-width="0.8" fill="none" /><path d="M600.0 557.0L795.0 657.0" stroke="#86a070" stroke-width="1" fill="none" /><path d="M620.0 566.0L795.0 659.5" stroke="#7f9a6a" stroke-width="1" fill="none" /><path d="M640.0 578.0L795.0 662.0" stroke="#6f8a5a" stroke-width="1.1" fill="none" /><path d="M818.0 650.0L1196.0 585.0" stroke="#a89a88" stroke-width="0.8" fill="none" /><path d="M800.0 655.5L1196.0 586.0" stroke="#86a070" stroke-width="1" fill="none" /><path d="M800.0 658.5L1196.0 588.5" stroke="#7f9a6a" stroke-width="1" fill="none" /><path d="M800.0 661.5L1196.0 591.0" stroke="#6f8a5a" stroke-width="1.1" fill="none" /><path d="M590.5 294.0V562.0" stroke="#4a7a4a" stroke-width="1"/><rect x="591" y="295.0" width="2.00" height="266.0" fill="#dff0d8" opacity="1"/><path d="M593.8 295.0V561.0" stroke="#4a7a4a" stroke-width="1"/><rect x="594.3" y="300.0" width="5.70" height="258.0" fill="#cfc8b8" opacity="1"/><rect x="600.3" y="314.0" width="2.90" height="236.0" fill="#4a4a8c" opacity="1"/><rect x="603.2" y="314.0" width="3.00" height="237.0" fill="#0a0a14" opacity="1"/><path d="M610.5 318.0V553.0" stroke="#8a7a68" stroke-width="0.9"/><path d="M617.3 322.0V556.0" stroke="#8a7a68" stroke-width="0.9"/><path d="M623.5 326.0V559.0" stroke="#9a9a90" stroke-width="0.9"/><path d="M639.6 331.0V585.0" stroke="#5a7a5a" stroke-width="0.9"/><rect x="641.6" y="333.0" width="3.60" height="239.0" fill="#163840" opacity="1"/><path d="M646.2 333.0V585.0" stroke="#4a7a4a" stroke-width="0.9"/><path d="M649.5 335.0V585.0" stroke="#5a8a4a" stroke-width="0.9"/><path d="M652.6 335.0V572.0" stroke="#6a5040" stroke-width="0.9"/><rect x="653.2" y="336.5" width="5.00" height="234.5" fill="#050505" opacity="1"/><path d="M684.8 352.0V608.0" stroke="#7a9a7a" stroke-width="0.9"/><path d="M688.2 352.0V608.0" stroke="#3a6a3a" stroke-width="1"/><rect x="692.2" y="355.0" width="2.30" height="237.0" fill="#9aa0c0" opacity="1"/><rect x="694.5" y="355.0" width="4.30" height="238.0" fill="#15157a" opacity="1"/><path d="M700.3 356.0V610.0" stroke="#4a7a4a" stroke-width="0.9"/><rect x="704" y="360.0" width="3.00" height="232.0" fill="#4a4a80" opacity="1"/><rect x="707" y="360.0" width="3.20" height="233.0" fill="#080808" opacity="1"/><path d="M730.4 372.0V632.0" stroke="#3a5a3a" stroke-width="1"/><path d="M733.9 374.0V632.0" stroke="#7a9a7a" stroke-width="0.9"/><rect x="745" y="381.0" width="1.30" height="234.0" fill="#2a2a8a" opacity="1"/><rect x="746.3" y="381.0" width="2.50" height="234.0" fill="#3a4ab8" opacity="1"/><rect x="748.8" y="381.0" width="1.50" height="234.0" fill="#1a1a70" opacity="1"/><path d="M753 383.0V620.0" stroke="#7a7a40" stroke-width="0.9"/><path d="M757.2 384.0V620.0" stroke="#888" stroke-width="0.9"/><rect x="758.5" y="384.0" width="3.70" height="232.0" fill="#050505" opacity="1"/><path d="M792.7 397.0V662.0" stroke="#3a6a3a" stroke-width="1"/><rect x="793.2" y="398.0" width="4.80" height="262.0" fill="#d4e2cc" opacity="1"/><rect x="798" y="397.0" width="3.20" height="241.0" fill="#102a70" opacity="1"/><rect x="801.2" y="397.0" width="0.80" height="241.0" fill="#8ab0d0" opacity="1"/><rect x="802" y="397.0" width="3.20" height="263.0" fill="#4f8058" opacity="1"/><rect x="805.2" y="398.0" width="2.80" height="262.0" fill="#d8e0c0" opacity="1"/><rect x="808" y="398.0" width="4.50" height="262.0" fill="#ead8c0" opacity="1"/><rect x="813" y="400.0" width="3.50" height="236.0" fill="#2a2480" opacity="1"/><rect x="816.5" y="400.0" width="1.70" height="236.0" fill="#080808" opacity="1"/><rect x="897.2" y="385.0" width="2.40" height="237.0" fill="#555" opacity="1"/><rect x="899.6" y="385.0" width="3.40" height="236.0" fill="#050505" opacity="1"/><path d="M903.3 385.0V630.0" stroke="#7a7a40" stroke-width="0.8"/><rect x="908.4" y="382.0" width="2.60" height="240.0" fill="#4a4a8a" opacity="1"/><rect x="911" y="382.0" width="2.20" height="240.0" fill="#080808" opacity="1"/><polygon points="913.2,383 920,382 920,623 913.2,624" fill="#fff"/><path d="M916.4 377.0V642.0" stroke="#3a6a3a" stroke-width="1"/><path d="M919.7 378.0V642.0" stroke="#5a8a5a" stroke-width="0.9"/><rect x="992" y="368.0" width="3.00" height="241.0" fill="#555" opacity="1"/><rect x="995" y="368.0" width="2.60" height="240.0" fill="#050505" opacity="1"/><rect x="997.6" y="368.0" width="4.40" height="242.0" fill="#c8c0a8" opacity="1"/><rect x="1003" y="368.0" width="3.00" height="240.0" fill="#1a2a80" opacity="1"/><rect x="1006" y="368.0" width="2.80" height="240.0" fill="#0a200a" opacity="1"/><path d="M1009.3 361.0V627.0" stroke="#3a7a3a" stroke-width="1"/><rect x="1086" y="355.0" width="3.00" height="239.0" fill="#444" opacity="1"/><rect x="1089" y="355.0" width="2.20" height="239.0" fill="#050505" opacity="1"/><path d="M1092 350.0V600.0" stroke="#7a8a50" stroke-width="0.9"/><rect x="1093" y="350.0" width="3.50" height="250.0" fill="#d0d8c8" opacity="1"/><rect x="1097" y="345.0" width="4.50" height="249.0" fill="#1f4a50" opacity="1"/><path d="M1174.3 346.0V581.0" stroke="#888" stroke-width="0.9"/><path d="M1178.5 340.0V581.0" stroke="#999" stroke-width="0.9"/><rect x="1181.5" y="346.0" width="2.10" height="234.0" fill="#333" opacity="1"/><rect x="1183.6" y="346.0" width="2.60" height="234.0" fill="#080505" opacity="1"/><rect x="1192" y="328.0" width="3.00" height="262.0" fill="#e8ecd8" opacity="1"/><rect x="1195" y="327.0" width="3.00" height="265.0" fill="#2f6a3f" opacity="1"/><polygon points="601.5,549.5 639.5,566.4 639.5,570.0 601.5,553.1" fill="#0c0c14"/><polygon points="601.5,551.5 639.5,568.4 639.5,570.0 601.5,553.1" fill="#2a2a90"/><path d="M623.5 326.3L639.5 334.6" stroke="#8a7c6c" stroke-width="0.8"/><polygon points="653.0,571.0 694.5,591.7 694.5,595.3 653.0,574.6" fill="#0c0c14"/><polygon points="653.0,573.0 694.5,593.7 694.5,595.3 653.0,574.6" fill="#2a2a90"/><path d="M658.0 337.5L694.5 356.7" stroke="#8a7c6c" stroke-width="0.8"/><polygon points="706.0,592.4 745.0,614.3 745.0,617.9 706.0,596.0" fill="#0c0c14"/><polygon points="706.0,594.4 745.0,616.3 745.0,617.9 706.0,596.0" fill="#2a2a90"/><path d="M710.0 363.0L745.0 381.2" stroke="#8a7c6c" stroke-width="0.8"/><polygon points="758.0,615.7 792.5,632.5 792.5,636.1 758.0,619.3" fill="#0c0c14"/><polygon points="758.0,617.7 792.5,634.5 792.5,636.1 758.0,619.3" fill="#2a2a90"/><path d="M762.0 384.7L792.5 400.0" stroke="#8a7c6c" stroke-width="0.8"/><polygon points="818.0,636.8 901.0,621.0 901.0,624.6 818.0,640.4" fill="#0c0c14"/><path d="M818.0 639.4L901.0 623.6" stroke="#777" stroke-width="0.8" stroke-dasharray="2 2"/><path d="M818.0 400.6L897.0 388.9" stroke="#8a7c6c" stroke-width="0.8"/><polygon points="914.0,622.7 992.0,609.1 992.0,612.7 914.0,626.3" fill="#0c0c14"/><path d="M914.0 625.3L992.0 611.7" stroke="#777" stroke-width="0.8" stroke-dasharray="2 2"/><path d="M920.0 385.1L992.0 374.0" stroke="#8a7c6c" stroke-width="0.8"/><polygon points="1009.0,608.5 1086.0,594.1 1086.0,597.7 1009.0,612.1" fill="#0c0c14"/><path d="M1009.0 611.1L1086.0 596.7" stroke="#777" stroke-width="0.8" stroke-dasharray="2 2"/><path d="M1010.0 371.7L1086.0 359.6" stroke="#8a7c6c" stroke-width="0.8"/><polygon points="1102.5,593.6 1184.0,580.0 1184.0,583.6 1102.5,597.2" fill="#0c0c14"/><path d="M1102.5 596.2L1184.0 582.6" stroke="#777" stroke-width="0.8" stroke-dasharray="2 2"/><path d="M1101.5 358.9L1174.0 347.4" stroke="#8a7c6c" stroke-width="0.8"/><path d="M593.0 294.0L795.5 397.5" stroke="#6a7a5a" stroke-width="0.9" fill="none" /><path d="M592.5 562.5L795.5 665.0" stroke="#5a6a4a" stroke-width="1" fill="none" /><path d="M795.5 665.0L1196.0 593.0" stroke="#5a6a4a" stroke-width="1" fill="none" /><path d="M623.0 291.8L807.0 386.2" stroke="#8a7a68" stroke-width="0.9" fill="none" /><path d="M807.0 386.2L1174.0 321.2" stroke="#8a7a68" stroke-width="0.9" fill="none" /><path d="M1174.0 320.5L1190.0 327.0" stroke="#999" stroke-width="1.6" fill="none" /><path d="M604.0 293.0L623.0 291.0" stroke="#999" stroke-width="1.6" fill="none" /><rect x="640.9" y="317.6" width="3.2" height="3.2" fill="#1a2aa0"/><rect x="686.3" y="340.9" width="3.2" height="3.2" fill="#1a2aa0"/><rect x="731.8" y="363.6" width="3.2" height="3.2" fill="#1a2aa0"/><rect x="914.7" y="374.4" width="3.2" height="3.2" fill="#1a2aa0"/><rect x="1005.0" y="358.3" width="3.2" height="3.2" fill="#1a2aa0"/><rect x="1096.4" y="342.3" width="3.2" height="3.2" fill="#1a2aa0"/><rect x="641.0" y="583.9" width="3.2" height="3.2" fill="#1a2aa0"/><rect x="686.4" y="606.4" width="3.2" height="3.2" fill="#1a2aa0"/><rect x="731.2" y="630.7" width="3.2" height="3.2" fill="#1a2aa0"/><rect x="914.5" y="640.2" width="3.2" height="3.2" fill="#1a2aa0"/><rect x="1005.4" y="624.4" width="3.2" height="3.2" fill="#1a2aa0"/><rect x="1096.3" y="608.2" width="3.2" height="3.2" fill="#1a2aa0"/><rect x="591.3" y="292.0" width="3.2" height="3.2" fill="#111"/><rect x="590.9" y="558.9" width="3.2" height="3.2" fill="#111"/><rect x="793.9" y="395.9" width="3.2" height="3.2" fill="#111"/><rect x="793.9" y="661.2" width="3.2" height="3.2" fill="#111"/><rect x="1194.4" y="324.4" width="3.2" height="3.2" fill="#111"/><rect x="1194.4" y="590.7" width="3.2" height="3.2" fill="#111"/><polygon points="687.0,544.5 671.0,536.2 671.0,540.2 663.0,528.5 671.0,525.2 671.0,529.2 687.0,537.5" fill="none" stroke="#222" stroke-width="0.9" stroke-linejoin="miter"/><polygon points="740.0,567.5 723.0,558.7 723.0,562.7 715.0,551.0 723.0,547.7 723.0,551.7 740.0,560.5" fill="none" stroke="#222" stroke-width="0.9" stroke-linejoin="miter"/><polygon points="792.0,588.5 775.5,580.1 775.5,584.1 767.5,572.5 775.5,569.1 775.5,573.1 792.0,581.5" fill="none" stroke="#222" stroke-width="0.9" stroke-linejoin="miter"/><polygon points="828.0,594.0 862.2,588.0 862.2,592.8 879.4,580.0 862.2,573.2 862.2,578.0 828.0,584.0" fill="none" stroke="#222" stroke-width="0.9" stroke-linejoin="miter"/><polygon points="927.1,578.8 959.1,573.2 959.1,578.0 975.4,565.5 959.1,558.8 959.1,563.6 927.1,569.2" fill="none" stroke="#222" stroke-width="0.9" stroke-linejoin="miter"/><polygon points="1021.2,565.3 1053.7,559.3 1053.7,564.1 1069.9,551.5 1053.7,544.9 1053.7,549.7 1021.2,555.7" fill="none" stroke="#222" stroke-width="0.9" stroke-linejoin="miter"/><path d="M623.0 486.0L623.0 539.0" stroke="#333" stroke-width="1" fill="none" /><path d="M610.0 507.0L634.4 518.7" stroke="#333" stroke-width="1" fill="none" /><path d="M1140.3 513.7L1140.3 567.4" stroke="#222" stroke-width="1" fill="none" /><path d="M1115.3 546.2L1164.3 536.9" stroke="#222" stroke-width="1" fill="none" /><path d="M792.2 527.5C786.3 530 786.3 545.5 792.2 548.5" stroke="#1a1a1a" stroke-width="1.5" fill="none"/><path d="M792.6 526v25" stroke="#2a4a2a" stroke-width="1.3"/><path d="M811.6 531v21" stroke="#6a5a48" stroke-width="1.3"/><rect x="809.8" y="529.8" width="3.4" height="3.6" fill="#111"/><rect x="809.8" y="549.5" width="3.4" height="4" fill="#111"/><path d="M813 531.5h3.5M813 551.5h3.5" stroke="#111" stroke-width="1.4"/><path d="M805 541.5l5.5-1.5" stroke="#8a7a68" stroke-width="0.9"/></g><path d="M809.3 483.5v13.6l3.2-3 2.6 5.2 2.1-1-2.6-5.1h4.3z" fill="#fff" stroke="#111" stroke-width="0.9" stroke-linejoin="round"/><circle cx="821.7" cy="483.3" r="5.3" fill="#e6f8ff" stroke="#3d8fe0" stroke-width="2.6"/></svg>
<svg style="left:0;top:0" width="300" height="800" viewBox="0 0 300 800"><g fill="#c4c4c4"><rect x="264" y="171" width="3.5" height="9.5"/><rect x="260.5" y="174" width="10.5" height="3.5"/><rect x="269.5" y="179.5" width="2.5" height="2.5"/><rect x="273" y="179.5" width="2.5" height="2.5"/><rect x="269.5" y="183" width="2.5" height="2.5"/><rect x="273" y="183" width="2.5" height="2.5"/></g><g fill="#c4c4c4"><rect x="260.5" y="193" width="10.5" height="3.5"/><rect x="270" y="198.5" width="6" height="6"/></g><g stroke="#777" stroke-width="1.5"><path d="M260 209l4.5 4.5M275 209l-4.5 4.5M260 223l4.5-4.5M275 223l-4.5-4.5"/></g><g fill="#333"><path d="M266.5 215.5v-5l-5 5z"/><path d="M268.5 215.5v-5l5 5z"/><path d="M266.5 217v5l-5-5z"/><path d="M268.5 217v5l5-5z"/></g><path d="M262.5 230l5-2.5 5 2.5v6.5l-5 2.5-5-2.5z" fill="#c8c8c8"/><path d="M267.5 232.5l5-2.5v6.5l-5 2.5z" fill="#555"/><path d="M262.5 230l5 2.5v6.5l-5-2.5z" fill="#aaa"/><ellipse cx="267.5" cy="238.5" rx="9.5" ry="3" fill="none" stroke="#333" stroke-width="1.6"/><path d="M265 241.5l2.5 2 -0.5-3.5z" fill="#333"/><path d="M262 249l11 11M273 249l-11 11" stroke="#b4b4b4" stroke-width="1.8"/><path d="M258.5 264V282" stroke="#aaa" stroke-width="0.8"/><path d="M258.5 264.5H277" stroke="#aaa" stroke-width="0.8"/><path d="M265.5 268v11.5l2.7-2.7 2.2 4.3 1.8-0.9-2.1-4.2h3.8z" fill="#fff" stroke="#333" stroke-width="1"/><rect x="261" y="286.5" width="9.5" height="6.5" fill="none" stroke="#888" stroke-width="0.8" stroke-dasharray="1.3 1"/><path d="M268.5 291.5l5.5 5-2 .5 1.7 2.7-1.2.6-1.6-2.6-1.8 1.2z" fill="#333"/><path d="M267.8 304v4M267.8 308l-4.5 12M267.8 308l4.5 12" stroke="#333" stroke-width="1.3" fill="none"/><rect x="266.3" y="306" width="3" height="4" fill="#333"/><path d="M263 334l-2.5-3.5a1.1 1.1 0 0 1 1.8-1.3l1.7 1.8V327a1.1 1.1 0 0 1 2.2 0v4.5v-6.5a1.1 1.1 0 0 1 2.2 0v6.5v-6a1.1 1.1 0 0 1 2.2 0v6v-4.5a1.1 1.1 0 0 1 2.2 0v8c0 3-2 5-5 5h-1.5c-1.8 0-2.5-.8-3.3-2z" fill="#3b4a55"/><path d="M263 353l-2.5-3.5a1.1 1.1 0 0 1 1.8-1.3l1.7 1.8V346a1.1 1.1 0 0 1 2.2 0v4.5v-6.5a1.1 1.1 0 0 1 2.2 0v6.5v-6a1.1 1.1 0 0 1 2.2 0v6v-4.5a1.1 1.1 0 0 1 2.2 0v8c0 3-2 5-5 5h-1.5c-1.8 0-2.5-.8-3.3-2z" fill="#3b4a55"/><path d="M268 351.5l4.5 4.5M272.5 351.5l-4.5 4.5" stroke="#f4f4f4" stroke-width="1.6"/><path d="M253 362.5H284" stroke="#aaa" stroke-width="0.9"/><g fill="#fff" stroke="#c2c2c2" stroke-width="1"><path d="M261 368h7l2 2v9h-9z"/><path d="M265.5 371h6.5l3 3v8.5h-9.5z"/><path d="M267.5 375h5M267.5 377.5h5M267.5 380h5" /></g><g fill="#e4e4e4" stroke="#c2c2c2" stroke-width="1"><path d="M262 388h7l2 2v10h-9z" fill="#fff"/><path d="M266 398l6-6 3 3-6 6-3 0z"/></g><g fill="#fff" stroke="#c2c2c2" stroke-width="1"><path d="M261 405.5h7l2 2v12h-9z"/><path d="M266 408.5h6.5l3 3v10h-9.5z"/><path d="M268.5 413h5M268.5 415.5h5M268.5 418h5M261.5 414h4M263 412.5l-2 1.5 2 1.5"/></g><rect x="256.2" y="425.5" width="10" height="11.5" fill="#fff" stroke="#bbb" stroke-width="1"/><rect x="258.7" y="427.8" width="9" height="10.5" fill="#f0f0f0" stroke="#bbb" stroke-width="0.8"/><rect x="261.5" y="430.5" width="9.5" height="10" fill="#d4d4d4" stroke="#555" stroke-width="1"/><path d="M276 432h5l-2.5 2.5z" fill="#222"/><rect x="261" y="562" width="13" height="13" fill="#ececec" stroke="#c8c8c8" stroke-width="0.8"/><circle cx="266.8" cy="568" r="3.6" fill="none" stroke="#888" stroke-width="1.1"/><path d="M269.5 570.8l3 3" stroke="#888" stroke-width="1.5"/><path d="M267 577.5v4.5l2.5-2.2z" fill="#111"/><rect x="261" y="590" width="13.5" height="13.5" fill="#7b8591"/><rect x="264" y="591" width="7.5" height="4.5" fill="#eef3f8"/><rect x="265" y="592" width="1.6" height="2" fill="#333"/><path d="M264 598v4M267 598v4M270 598v4" stroke="#8f99a4" stroke-width="0.8"/><path d="M267 605.5v5l2.5-2.5z" fill="#111"/><circle cx="266.2" cy="623" r="4.7" fill="#f4f4f4" stroke="#555" stroke-width="1.3"/><path d="M269.8 626.6l3.8 3.8" stroke="#666" stroke-width="2.2"/><path d="M263.7 623h5M266.2 620.5v5" stroke="#222" stroke-width="1.7"/><circle cx="266.2" cy="642.3" r="4.7" fill="#f4f4f4" stroke="#555" stroke-width="1.3"/><path d="M269.8 645.9l3.8 3.8" stroke="#666" stroke-width="2.2"/><path d="M263.7 642.3h5" stroke="#222" stroke-width="1.7"/><rect x="261" y="656.5" width="13" height="13.5" fill="#d6d6d6"/><circle cx="267" cy="662" r="3.5" fill="none" stroke="#e6e6e6" stroke-width="1"/><path d="M253 675H284" stroke="#aaa" stroke-width="0.9"/><circle cx="266" cy="686" r="4.8" fill="#f2f2f2" stroke="#888" stroke-width="1.2"/><path d="M269.5 689.5l3.8 3.8" stroke="#777" stroke-width="2"/><path d="M260.5 694l3-3v2.2h1.5v1.6h-1.5v2.2z" fill="#222"/><circle cx="266" cy="705.3" r="4.8" fill="#f2f2f2" stroke="#888" stroke-width="1.2"/><path d="M269.5 708.8l3.8 3.8" stroke="#777" stroke-width="2"/><path d="M260.5 713.3l3-3v2.2h1.5v1.6h-1.5v2.2z" fill="#222"/><circle cx="266" cy="724.5" r="4.8" fill="#f2f2f2" stroke="#888" stroke-width="1.2"/><path d="M269.5 728.0l3.8 3.8" stroke="#777" stroke-width="2"/><path d="M273.5 716.5l-2.5 3h1.7v2.5h1.6v-2.5h1.7z" fill="#222"/><circle cx="266" cy="743.8" r="4.8" fill="#f2f2f2" stroke="#888" stroke-width="1.2"/><path d="M269.5 747.3l3.8 3.8" stroke="#777" stroke-width="2"/><path d="M273.5 735.8l-2.5 3h1.7v2.5h1.6v-2.5h1.7z" fill="#222"/></svg>
</body></html>
